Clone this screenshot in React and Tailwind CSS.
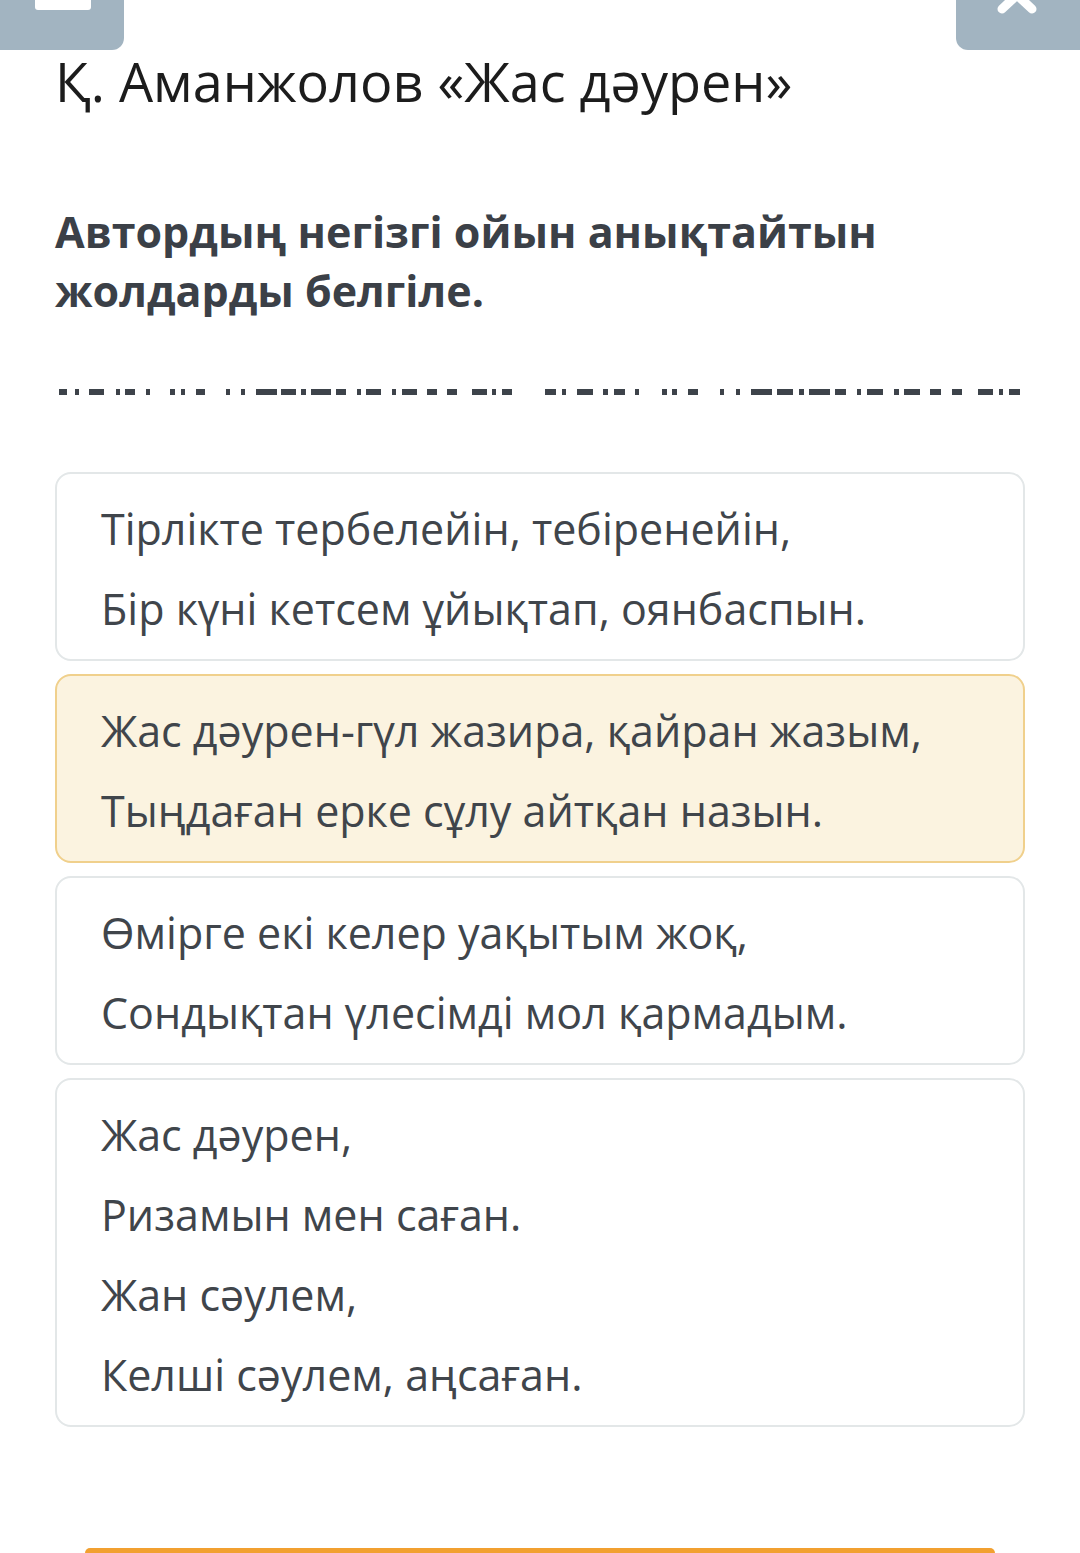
import React from 'react';

const dashes = [
  [59, 8], [75, 4], [89, 15], [116, 4], [125, 10], [146, 4], [170, 5], [181, 4], [196, 9],
  [226, 4], [241, 4], [256, 21], [281, 15], [301, 5], [311, 20], [336, 10], [357, 4], [366, 15],
  [392, 4], [402, 15], [427, 10], [447, 10], [472, 15], [492, 4], [502, 10],
  [545, 11], [562, 4], [577, 16], [603, 5], [614, 11], [635, 4], [662, 5], [672, 5], [688, 10],
  [720, 4], [736, 4], [751, 21], [777, 16], [799, 5], [809, 21], [835, 11], [857, 4], [867, 16],
  [894, 5], [904, 16], [930, 11], [952, 10], [978, 15], [999, 4], [1009, 11],
];

const options = [
  { lines: ['Тірлікте тербелейін, тебіренейін,', 'Бір күні кетсем ұйықтап, оянбаспын.'] },
  { lines: ['Жас дәурен-гүл жазира, қайран жазым,', 'Тыңдаған ерке сұлу айтқан назын.'], selected: true },
  { lines: ['Өмірге екі келер уақытым жоқ,', 'Сондықтан үлесімді мол қармадым.'] },
  { lines: ['Жас дәурен,', 'Ризамын мен саған.', 'Жан сәулем,', 'Келші сәулем, аңсаған.'] },
];

export default function App() {
  return (
    <div className="w-[1080px] h-[1553px] bg-white overflow-hidden font-['Open_Sans',sans-serif] flex flex-col">
      <div className="flex justify-between h-[50px] shrink-0">
        <div className="w-[124px] h-[50px] bg-[#a2b4c1] rounded-br-[12px] flex justify-center">
          <div className="w-[56px] h-[10px] bg-white rounded-b-[3px] ml-[2px]"></div>
        </div>
        <div className="w-[124px] h-[50px] bg-[#a2b4c1] rounded-bl-[12px] flex justify-center overflow-hidden">
          <svg width="50" height="20" viewBox="0 0 50 20" className="ml-[-2px]">
            <path d="M9 -20 L40 9 M41 -20 L10 9" stroke="white" strokeWidth="9" strokeLinecap="round" fill="none" />
          </svg>
        </div>
      </div>

      <div className="px-[55px]">
        <h1 className="text-[54px] leading-[60px] text-[#1c1c1c] font-normal mt-[1px]">Қ. Аманжолов «Жас дәурен»</h1>

        <h2 className="text-[43px] leading-[59px] font-bold text-[#3b4047] mt-[91px]">
          Автордың негізгі ойын анықтайтын<br />жолдарды белгіле.
        </h2>

        <svg width="970" height="8" viewBox="55 386 970 8" className="block mt-[68px]">
          {dashes.map(([x, w], i) => (
            <rect key={i} x={x} y={387} width={w} height={6} fill="#3d434a" />
          ))}
        </svg>

        <div className="flex flex-col gap-[13px] mt-[76px]">
          {options.map((o, i) => (
            <div
              key={i}
              className={
                o.selected
                  ? 'border-2 border-[#f0d08c] bg-[#fbf3e0] rounded-[16px] px-[44px] pt-[15px] pb-[10px]'
                  : 'border-2 border-[#e3e7e8] bg-white rounded-[16px] px-[44px] pt-[15px] pb-[10px]'
              }
            >
              {o.lines.map((l, j) => (
                <div key={j} className="text-[43px] leading-[80px] text-[#40454b]">{l}</div>
              ))}
            </div>
          ))}
        </div>
      </div>

      <div className="mt-auto mx-[85px] h-[5px] bg-[#f2a030] rounded-t-[6px]"></div>
    </div>
  );
}
